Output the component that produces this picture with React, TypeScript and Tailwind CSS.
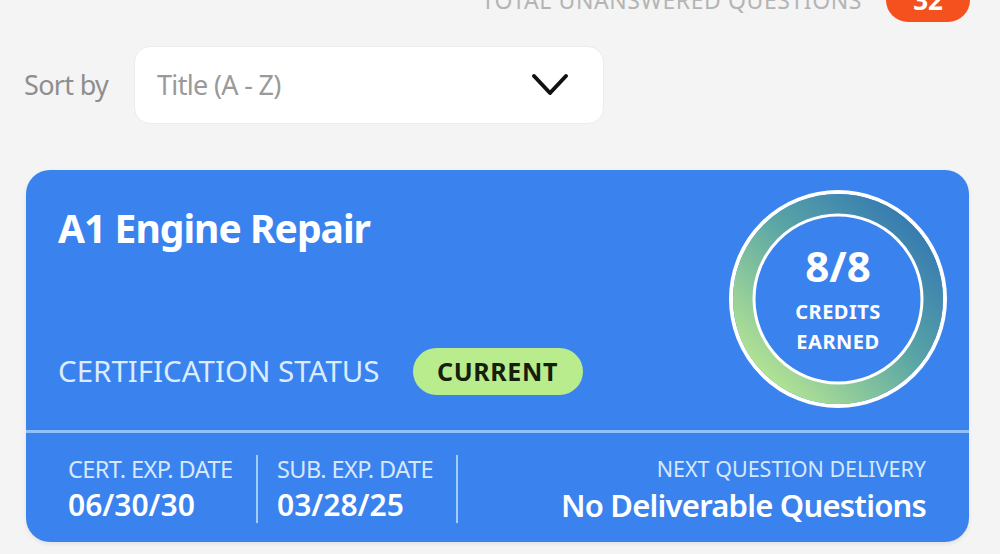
function CreditsRing({ earned, total }: { earned: number; total: number }) {
  return (
    <div className="relative h-[222px] w-[222px] shrink-0">
      <svg viewBox="0 0 222 222" className="absolute inset-0 h-full w-full">
        <defs>
          <linearGradient id="ring" x1="1" y1="0" x2="0" y2="1">
            <stop offset="0%" stopColor="#2d6fb4" />
            <stop offset="45%" stopColor="#58a4a6" />
            <stop offset="100%" stopColor="#c8f28e" />
          </linearGradient>
        </defs>
        <circle cx="111" cy="111" r="107" fill="none" stroke="#ffffff" strokeWidth="4" />
        <circle cx="111" cy="111" r="95" fill="none" stroke="url(#ring)" strokeWidth="20" />
        <circle cx="111" cy="111" r="84" fill="none" stroke="#ffffff" strokeWidth="3" />
      </svg>
      <div className="relative flex h-full flex-col items-center justify-center pt-[4px] text-white">
        <span className="text-[42px] font-bold leading-none">
          {earned}/{total}
        </span>
        <span className="mt-[10px] text-[20px] font-bold leading-[30px] tracking-wide">CREDITS</span>
        <span className="text-[20px] font-bold leading-[30px] tracking-wide">EARNED</span>
      </div>
    </div>
  );
}

export default function App() {
  return (
    <div
      className="h-[554px] w-[1000px] overflow-hidden bg-[#f4f4f4]"
      style={{ fontFamily: '"Noto Sans", "Open Sans", sans-serif' }}
    >
      {/* Unanswered counter */}
      <div className="-mt-[22px] flex items-center justify-end gap-[24px] pr-[30px]">
        <span className="text-[23px] tracking-wide text-[#b4b4b4]">TOTAL UNANSWERED QUESTIONS</span>
        <span className="flex h-[44px] w-[84px] items-center justify-center rounded-[22px] bg-[#f4511e] text-[26px] font-bold text-white">
          32
        </span>
      </div>

      {/* Sort */}
      <div className="mt-[24px] flex items-center pl-[24px]">
        <span className="w-[110px] text-[27px] tracking-tight text-[#8e8e8e]">Sort by</span>
        <button className="flex h-[78px] w-[470px] items-center justify-between rounded-[16px] border border-[#ececec] bg-white pl-[22px] pr-[33px]">
          <span className="text-[27px] tracking-tight text-[#9a9a9a]">Title (A - Z)</span>
          <svg viewBox="0 0 40 24" className="h-[24px] w-[40px]" fill="none" stroke="#111" strokeWidth="4" strokeLinecap="round" strokeLinejoin="round">
            <polyline points="4,3 20,20 36,3" />
          </svg>
        </button>
      </div>

      {/* Certification card */}
      <div className="ml-[26px] mt-[46px] h-[372px] w-[943px] overflow-hidden rounded-[24px] bg-[#3a83ee] shadow-[0_2px_4px_rgba(0,0,0,0.08)]">
        <div className="flex h-[260px] items-start justify-between pl-[32px] pr-[20px]">
          <div className="flex flex-col pt-[34px]">
            <h2 className="text-[39px] font-bold leading-[48px] tracking-tight text-white">A1 Engine Repair</h2>
            <div className="mt-[96px] flex items-center gap-[33px]">
              <span className="text-[29.5px] text-[#dcecff]">CERTIFICATION STATUS</span>
              <span className="flex h-[47px] w-[170px] items-center justify-center rounded-full bg-[#b9ec8c] text-[25px] font-bold tracking-wide text-[#14200c]">
                CURRENT
              </span>
            </div>
          </div>
          <div className="pt-[18px]">
            <CreditsRing earned={8} total={8} />
          </div>
        </div>

        <div className="h-[3px] bg-[#8fc2fb]" />

        <div className="flex items-center pl-[42px] pr-[43px] pt-[20px]">
          <div className="flex w-[188px] flex-col">
            <span className="text-[23.5px] leading-[32px] tracking-tight text-[#d6e8ff]">CERT. EXP. DATE</span>
            <span className="text-[30px] font-semibold leading-[40px] text-white">06/30/30</span>
          </div>
          <div className="h-[68px] w-[2px] bg-[#a3cdfc]" />
          <div className="flex w-[198px] flex-col pl-[19px]">
            <span className="text-[23.5px] leading-[32px] tracking-tight text-[#d6e8ff]">SUB. EXP. DATE</span>
            <span className="text-[30px] font-semibold leading-[40px] text-white">03/28/25</span>
          </div>
          <div className="h-[68px] w-[2px] bg-[#a3cdfc]" />
          <div className="flex flex-1 flex-col items-end">
            <span className="text-[21.5px] leading-[32px] text-[#d6e8ff]">NEXT QUESTION DELIVERY</span>
            <span className="text-[31px] font-semibold leading-[40px] tracking-tight text-white">No Deliverable Questions</span>
          </div>
        </div>
      </div>
    </div>
  );
}
